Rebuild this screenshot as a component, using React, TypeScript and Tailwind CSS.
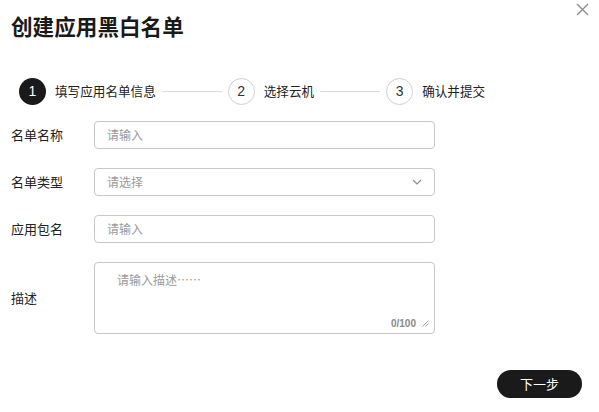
import React from 'react';

const FONT = { fontFamily: '"Noto Sans CJK SC", "Noto Sans", "Liberation Sans", sans-serif' };

const STEPS = [
  { num: 1, label: '填写应用名单信息', active: true },
  { num: 2, label: '选择云机', active: false },
  { num: 3, label: '确认并提交', active: false },
];

function Step({ num, label, active }: { num: number; label: string; active: boolean }) {
  return (
    <div className="flex items-center gap-[9px]">
      <div
        className={
          active
            ? 'flex h-[27px] w-[27px] items-center justify-center rounded-full bg-[#1a1a1a] text-[14px] text-white'
            : 'flex h-[27px] w-[27px] items-center justify-center rounded-full border border-[#cfcfcf] bg-white text-[14px] text-[#333]'
        }
        style={{ fontFamily: '"Liberation Sans", Arial, sans-serif' }}
      >
        {num}
      </div>
      <span className="text-[12.6px] text-[#222]">{label}</span>
    </div>
  );
}

function FormRow({ label, children }: { label: string; children: React.ReactNode }) {
  return (
    <div className="flex items-center">
      <div className="w-[83px] shrink-0 text-[13px] text-[#222]">{label}</div>
      {children}
    </div>
  );
}

export default function App(): React.JSX.Element {
  return (
    <div className="relative h-[412px] w-[599px] overflow-hidden bg-white" style={FONT}>
      <button className="absolute top-[3px] right-[10px] p-0 text-[#8a8a8a]">
        <svg width="13" height="13" viewBox="0 0 13 13" fill="none" stroke="currentColor" strokeWidth="1.3">
          <path d="M1 1 L12 12 M12 1 L1 12" />
        </svg>
      </button>

      <div className="pt-[11px] pl-[11px]">
        <h1 className="text-[21.6px] leading-[30px] font-bold text-[#1a1a1a]">创建应用黑白名单</h1>
      </div>

      <div className="mt-[37px] flex items-center pl-[19px]">
        {STEPS.map((s, i) => (
          <React.Fragment key={s.num}>
            <Step {...s} />
            {i < STEPS.length - 1 && <div className="mx-[6px] h-px w-[60px] bg-[#d9d9d9]" />}
          </React.Fragment>
        ))}
      </div>

      <div className="mt-[16px] flex flex-col gap-[19px] pl-[11px]">
        <FormRow label="名单名称">
          <div className="flex h-[28px] w-[341px] items-center rounded-[4px] border border-[#c8c8c8] px-[12px] text-[12px] text-[#9a9a9a]">
            请输入
          </div>
        </FormRow>
        <FormRow label="名单类型">
          <div className="flex h-[28px] w-[341px] items-center justify-between rounded-[4px] border border-[#c8c8c8] px-[12px] text-[12px] text-[#9a9a9a]">
            <span>请选择</span>
            <svg width="10" height="6" viewBox="0 0 10 6" fill="none" stroke="#8a8a8a" strokeWidth="1.1">
              <path d="M1 1 L5 5 L9 1" />
            </svg>
          </div>
        </FormRow>
        <FormRow label="应用包名">
          <div className="flex h-[28px] w-[341px] items-center rounded-[4px] border border-[#c8c8c8] px-[12px] text-[12px] text-[#9a9a9a]">
            请输入
          </div>
        </FormRow>
        <FormRow label="描述">
          <div className="relative h-[72px] w-[341px] rounded-[4px] border border-[#c8c8c8] pt-[8px] pl-[22px] text-[12px] text-[#9a9a9a]">
            请输入描述……
            <div className="absolute right-[5px] bottom-[2px] flex items-center gap-[6px]">
              <span
                className="text-[10px] font-bold text-[#8a8a8a]"
                style={{ fontFamily: '"Liberation Sans", Arial, sans-serif' }}
              >
                0/100
              </span>
              <svg width="7" height="7" viewBox="0 0 7 7" fill="none" stroke="#9a9a9a" strokeWidth="0.9">
                <path d="M6.5 0.5 L0.5 6.5 M6.5 3.5 L3.5 6.5" />
              </svg>
            </div>
          </div>
        </FormRow>
      </div>

      <div className="mt-[36px] flex justify-end pr-[17px]">
        <button className="h-[28px] w-[85px] rounded-full bg-[#1a1a1a] text-[13px] text-white">下一步</button>
      </div>
    </div>
  );
}
